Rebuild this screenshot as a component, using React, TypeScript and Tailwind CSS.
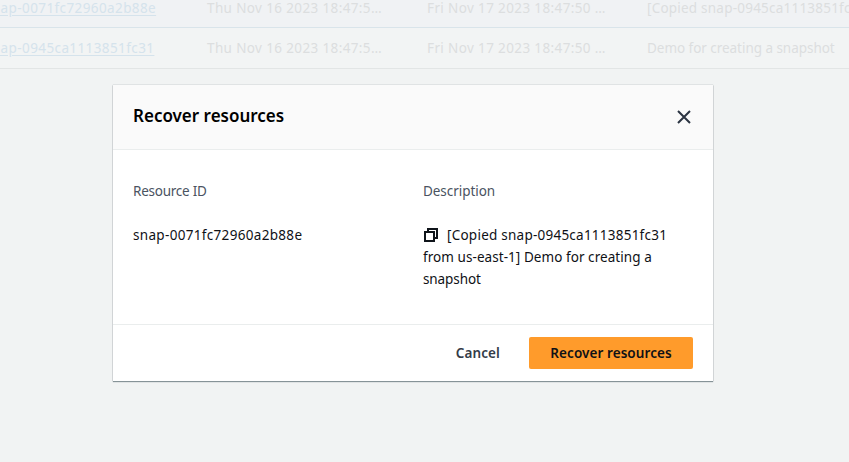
const rows = [
  {
    id: 'snap-0071fc72960a2b88e',
    description: '[Copied snap-0945ca1113851fc31 from us-east-1] Demo for creating a snapshot',
    descriptionClass: 'tracking-[0.22px]',
    rowClass: 'h-7 border-[#d9e4ea] bg-[#f0f2f4] pb-[11px]',
  },
  {
    id: 'snap-0945ca1113851fc31',
    description: 'Demo for creating a snapshot',
    descriptionClass: 'tracking-[-0.04px]',
    rowClass: 'h-[41px] border-[#e2e5e5] bg-[#f2f4f4]',
  },
];

function SnapshotRows() {
  return (
    <div className="w-[849px] text-[13.5px] leading-[22px] text-[#dcdedf]">
      {rows.map((row) => (
        <div
          key={row.id}
          className={`flex items-center overflow-hidden whitespace-nowrap border-b ${row.rowClass}`}
        >
          <div className="flex w-[207px] shrink-0">
            <a className="-ml-[15px] tracking-[0.4px] text-[#d5e3ec] underline underline-offset-2">{row.id}</a>
          </div>
          <div className="w-[220px] shrink-0 tracking-[0.37px]">Thu Nov 16 2023 18:47:5…</div>
          <div className="w-[220px] shrink-0 tracking-[0.37px]">Fri Nov 17 2023 18:47:50 …</div>
          <div className={`shrink-0 ${row.descriptionClass}`}>{row.description}</div>
        </div>
      ))}
    </div>
  );
}

function CloseIcon() {
  return (
    <svg width="16" height="16" viewBox="0 0 16 16" fill="none" stroke="#2b3442" strokeWidth="2">
      <path d="M2 2l12 12M14 2L2 14" />
    </svg>
  );
}

function CopyIcon() {
  return (
    <svg
      className="mr-2 inline-block align-[-3px]"
      width="16"
      height="16"
      viewBox="0 0 16 16"
      fill="none"
      stroke="#0f141a"
      strokeWidth="2"
    >
      <path d="M2 5h9v9H2zM5 5V2h9v9h-3" />
    </svg>
  );
}

function RecoverDialog() {
  return (
    <section className="ml-[113px] mt-4 flex h-[296px] w-[600px] flex-col bg-white shadow-[0_1px_1px_0_rgba(0,28,36,0.4),0_0_1px_0_rgba(0,28,36,0.4)]">
      <header className="flex h-[65px] items-center justify-between border-b border-[#eaeded] bg-[#fafafa] pl-5 pr-[21px]">
        <h2 className="whitespace-nowrap pb-0.5 text-[17px] font-semibold leading-[22px] text-black">Recover resources</h2>
        <button aria-label="Close">
          <CloseIcon />
        </button>
      </header>
      <div className="flex grow px-5 pt-[30px] text-[13.5px] leading-[22px] text-[#0f1116]">
        <div className="w-[290px]">
          <div className="tracking-[-0.24px] text-[#4a5361]">Resource ID</div>
          <div className="mt-[22px] tracking-[0.32px]">snap-0071fc72960a2b88e</div>
        </div>
        <div className="w-[270px] whitespace-nowrap">
          <div className="tracking-[-0.05px] text-[#4a5361]">Description</div>
          <div className="mt-[22px]">
            <div className="tracking-[0.24px]"><CopyIcon />[Copied snap-0945ca1113851fc31</div>
            <div className="tracking-[0.06px]">from us-east-1] Demo for creating a</div>
            <div className="tracking-[-0.1px]">snapshot</div>
          </div>
        </div>
      </div>
      <footer className="flex h-[57px] shrink-0 items-center justify-end border-t border-[#eaeded] pr-5 text-[13.5px] font-semibold">
        <button className="mr-[29px] tracking-[0.12px] text-[#343c48]">Cancel</button>
        <button className="h-8 w-[164px] whitespace-nowrap rounded-[2px] bg-[#ff9b2b] tracking-[0.08px] text-[#0f1116]">Recover resources</button>
      </footer>
    </section>
  );
}

export default function App() {
  return (
    <main className="h-[462px] w-[849px] overflow-hidden bg-[#f1f3f3] font-['Noto_Sans','Open_Sans',sans-serif]">
      <SnapshotRows />
      <RecoverDialog />
    </main>
  );
}
